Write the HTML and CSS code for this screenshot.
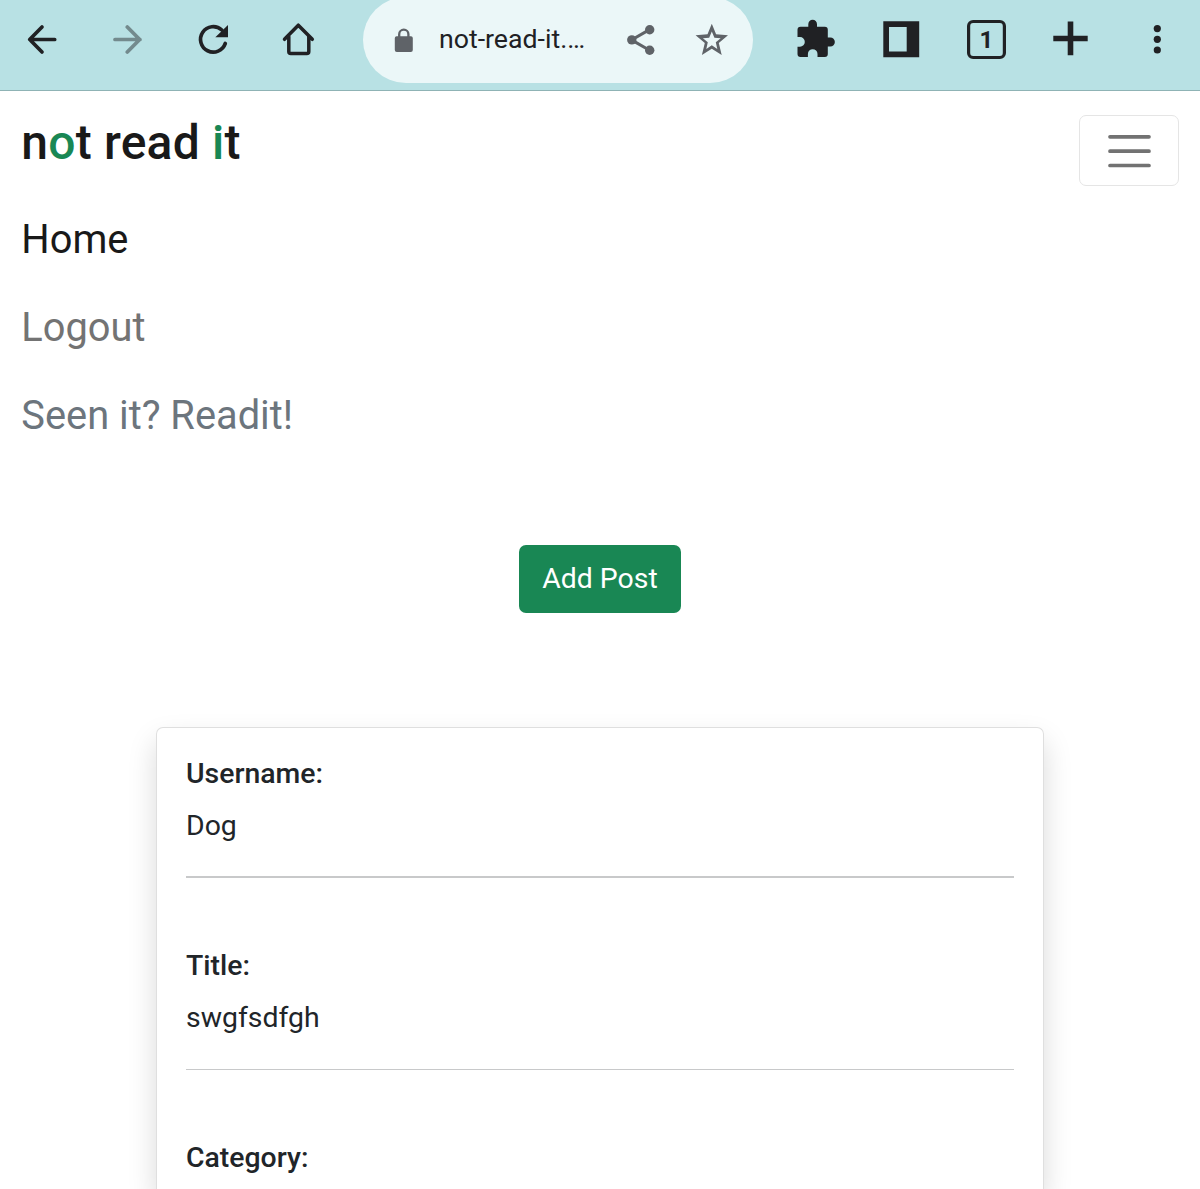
FILE: index.html
```html
<!DOCTYPE html>
<html lang="en">
<head>
<meta charset="utf-8">
<title>not read it</title>
<link rel="stylesheet" href="styles.css">
</head>
<body>
<header class="toolbar">
  <svg class="tool" viewBox="0 0 85 90"><path class="line" d="M54.7 39.5H30M42 27L29.7 39.5L42 52"/></svg>
  <svg class="tool tool-disabled" viewBox="85 0 85 90"><path class="line" d="M115 39.5H140M127.3 27L139.7 39.5L127.3 52"/></svg>
  <svg class="tool" viewBox="170 0 85 90"><path class="line" d="M225.3 43.4A12.7 12.7 0 1 1 221.8 30"/><path d="M228 25V37.3H215.3Z"/></svg>
  <svg class="tool" viewBox="255 0 85 90"><path class="line home" d="M284.5 39.3L298.3 25.2L312.3 39.3M288.8 36.5V51.5Q288.8 53.5 290.8 53.5H306.8Q308.8 53.5 308.8 51.5V36.5"/></svg>
  <div class="address">
    <svg class="lock" viewBox="394 27 20 26"><path d="M396.8 36.2H411A1.9 1.9 0 0 1 412.8 38V50A2 2 0 0 1 410.8 52H396.8A2 2 0 0 1 394.8 50V38A1.9 1.9 0 0 1 396.8 36.2Z"/><path class="shackle" d="M399.2 37V34.2A4.6 4.6 0 0 1 408.4 34.2V37"/></svg>
    <span class="url">not-read-it.…</span>
    <svg class="share" viewBox="626 23.7 31 33"><path class="link" d="M649.5 29.3L631.5 39.6L649.5 50"/><circle cx="649.7" cy="29.5" r="4.7"/><circle cx="631.8" cy="39.6" r="4.7"/><circle cx="649.7" cy="49.9" r="4.7"/></svg>
    <svg class="star" viewBox="694 22.5 36 35"><path d="M711.8 23.3L716.1 33.8L728 34.8L718.8 42.5L721.7 54.6L711.8 48.2L701.9 54.6L704.8 42.5L695.6 34.8L707.5 33.8ZM711.8 31.1L709.2 37.2L702.9 37.7L707.8 41.8L706.3 48.5L711.8 44.8L717.3 48.5L715.8 41.8L720.7 37.7L714.4 37.2Z"/></svg>
  </div>
  <svg class="tool" viewBox="773 0 85 90"><path d="M800.5 26.7H808.3V24.2A4.35 4.35 0 0 1 817 24.2V26.7H824.8A3 3 0 0 1 827.8 29.7V37.4H830.3A4.55 4.55 0 0 1 830.3 46.5H827.8V54A3 3 0 0 1 824.8 57H817.5V54A4.8 4.8 0 0 0 807.9 54V57H800.5A3 3 0 0 1 797.5 54V46.7H800A4.8 4.8 0 0 0 800 37.1H797.5V29.7A3 3 0 0 1 800.5 26.7Z"/></svg>
  <svg class="tool" viewBox="858 0 85 90"><path d="M883.3 21.3H919.2V57.2H883.3ZM889 27V51.5H906.7V27Z"/></svg>
  <svg class="tool" viewBox="943 0 85 90"><rect class="line tab" x="968.6" y="21.5" width="35.8" height="36" rx="4.5"/><text class="tab-count" x="986.3" y="48" text-anchor="middle">1</text></svg>
  <svg class="tool" viewBox="1028 0 85 90"><path d="M1067.7 21.5H1073.3V35.8H1087.7V41.2H1073.3V55.2H1067.7V41.2H1053.3V35.8H1067.7Z"/></svg>
  <svg class="tool" viewBox="1113 0 85 90"><circle cx="1157.3" cy="28.6" r="3.6"/><circle cx="1157.3" cy="39.3" r="3.6"/><circle cx="1157.3" cy="50" r="3.6"/></svg>
</header>
<nav class="navbar">
  <div class="nav-top">
    <a class="brand">n<span class="accent">o</span>t read <span class="accent">i</span>t</a>
    <button class="toggler" aria-label="Menu"><svg class="bars" viewBox="0 0 43 34"><path d="M2 2.8H41M2 17.2H41M2 31.5H41"/></svg></button>
  </div>
  <div class="nav-links">
    <a class="nav-link active">Home</a>
    <a class="nav-link">Logout</a>
    <span class="nav-link tagline">Seen it? Readit!</span>
  </div>
</nav>
<main class="content">
  <button class="add-post">Add Post</button>
  <section class="card">
    <div class="label">Username:</div>
    <div class="value">Dog</div>
    <hr class="rule thick">
    <div class="label">Title:</div>
    <div class="value">swgfsdfgh</div>
    <hr class="rule">
    <div class="label">Category:</div>
  </section>
</main>
</body>
</html>
```
FILE: styles.css
```css
* { box-sizing: border-box; }
html { height: 100%; overflow: hidden; }
body {
  margin: 0;
  height: 1189px;
  overflow: hidden;
  display: flex;
  flex-direction: column;
  background: #fff;
  color: #212529;
  font-family: Roboto, sans-serif;
}
button { font-family: inherit; margin: 0; }

.toolbar {
  flex: none;
  display: flex;
  align-items: flex-start;
  height: 91px;
  overflow: hidden;
  background: #b8e1e4;
  border-bottom: 1px solid #8fb3b5;
}
.tool { flex: none; display: block; width: 85px; height: 90px; fill: #202124; }
.tool-disabled { opacity: .45; }
.line { fill: none; stroke: #202124; stroke-width: 3.7; stroke-linecap: round; stroke-linejoin: round; }
.home { stroke-width: 3.5; }
.tab { stroke-width: 3.2; }
.tab-count { font: 700 24px Roboto, sans-serif; }

.address {
  flex: none;
  display: flex;
  align-items: center;
  width: 390px;
  height: 86px;
  margin: -3px 20px 0 23px;
  padding-left: 31px;
  border-radius: 43px;
  background: #ebf7f8;
  fill: #5f6368;
}
.lock { flex: none; width: 20px; height: 26px; }
.shackle { fill: none; stroke: #5f6368; stroke-width: 2.3; }
.url { flex: none; width: 147px; margin-left: 25px; padding-bottom: 2px; font-size: 26.7px; line-height: 32px; color: #202124; white-space: nowrap; }
.share { flex: none; width: 31px; height: 33px; margin-left: 40px; }
.link { fill: none; stroke: #5f6368; stroke-width: 3; }
.star { flex: none; width: 36px; height: 35px; margin-left: 37px; fill-rule: evenodd; }
.tool path { fill-rule: evenodd; }

.navbar { flex: none; padding: 24px 21px 0 21.3px; height: 369px; }
.nav-top { display: flex; justify-content: space-between; align-items: flex-start; height: 81px; }
.brand { font-size: 48px; font-weight: 500; letter-spacing: .2px; line-height: 56px; color: #191919; white-space: nowrap; }
.accent { color: #198754; }
.toggler {
  display: flex;
  align-items: center;
  justify-content: center;
  width: 100px;
  height: 71px;
  padding: 0;
  border: 1px solid #e5e5e5;
  border-radius: 7px;
  background: #fff;
}
.bars { width: 43px; height: 34px; fill: none; stroke: #727272; stroke-width: 3.7; stroke-linecap: round; }
.nav-link { display: block; height: 88px; font-size: 39.8px; line-height: 88px; color: #737373; white-space: nowrap; }
.nav-link.active { color: #191919; }
.nav-link.tagline { color: #6c757d; }

.content { flex: 1; min-height: 0; display: flex; flex-direction: column; align-items: center; padding-top: 85px; }
.add-post {
  flex: none;
  width: 162px;
  height: 68px;
  padding: 0 0 2px;
  border: 0;
  border-radius: 7px;
  background: #198754;
  color: #fff;
  font-size: 28.4px;
}
.card {
  flex: 1;
  min-height: 0;
  width: 888px;
  margin-top: 114px;
  padding: 20px 29px 0;
  border: 1px solid #dfdfdf;
  border-bottom: 0;
  border-radius: 7px 7px 0 0;
  background: #fff;
  box-shadow: 0 14.2px 28.4px rgba(0, 0, 0, .15);
}
.label, .value { height: 52px; font-size: 28.4px; line-height: 52px; }
.label { height: 52px; font-weight: 500; }
.label:last-child { height: 48px; }
.rule { height: 1px; margin: 25px 0 62px; border: 0; background: #c8c9ca; }
.rule.thick { height: 2px; margin: 24px 0 62px; }
```
